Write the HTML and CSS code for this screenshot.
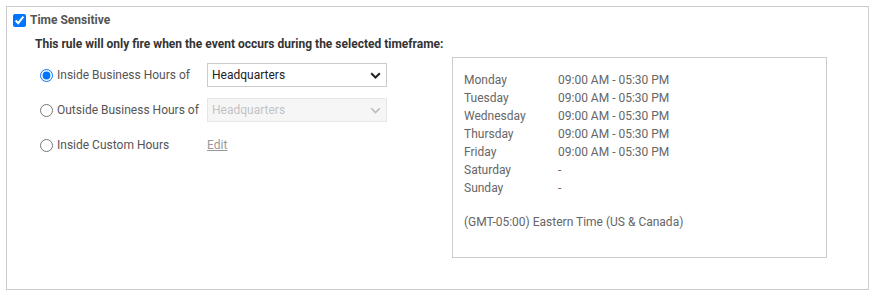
FILE: index.html
```html
<!DOCTYPE html>
<html>
<head>
  <title>Time Sensitive</title>
  <link rel="stylesheet" href="styles.css">
</head>
<body>

  <div class="panel">
    <div class="panel-head">
      <input type="checkbox" id="timeSensitive" checked />
      <label for="timeSensitive">Time Sensitive</label>
    </div>

    <p class="note">This rule will only fire when the event occurs during the selected timeframe:</p>

    <div class="panel-body">
      <div class="options">

        <div class="option-row">
          <input type="radio" name="hours" id="inside" checked />
          <label for="inside">Inside Business Hours of</label>
          <div class="select-wrap">
            <select>
              <option>Headquarters</option>
            </select>
            <svg class="chevron" width="11" height="7" viewBox="0 0 11 7"><path d="M1.2 1.2 L5.5 5.5 L9.8 1.2" fill="none" stroke="#222" stroke-width="2"/></svg>
          </div>
        </div>

        <div class="option-row">
          <input type="radio" name="hours" id="outside" />
          <label for="outside">Outside Business Hours of</label>
          <div class="select-wrap">
            <select disabled>
              <option>Headquarters</option>
            </select>
            <svg class="chevron" width="11" height="7" viewBox="0 0 11 7"><path d="M1.2 1.2 L5.5 5.5 L9.8 1.2" fill="none" stroke="#bbb" stroke-width="1.6"/></svg>
          </div>
        </div>

        <div class="option-row">
          <input type="radio" name="hours" id="custom" />
          <label for="custom">Inside Custom Hours</label>
          <a href="#" class="edit-link">Edit</a>
        </div>

      </div>

      <div class="schedule">
        <div class="day"><span>Monday</span><span>09:00 AM - 05:30 PM</span></div>
        <div class="day"><span>Tuesday</span><span>09:00 AM - 05:30 PM</span></div>
        <div class="day"><span>Wednesday</span><span>09:00 AM - 05:30 PM</span></div>
        <div class="day"><span>Thursday</span><span>09:00 AM - 05:30 PM</span></div>
        <div class="day"><span>Friday</span><span>09:00 AM - 05:30 PM</span></div>
        <div class="day"><span>Saturday</span><span>-</span></div>
        <div class="day"><span>Sunday</span><span>-</span></div>
        <p class="timezone">(GMT-05:00) Eastern Time (US &amp; Canada)</p>
      </div>
    </div>
  </div>

</body>
</html>
```

FILE: styles.css
```css
body {
  font-family: Roboto, "Liberation Sans", Arial, sans-serif;
  font-size: 12px;
  color: #555;
  background: #fff;
  margin: 0;
}

.panel {
  margin: 6px;
  width: 863px;
  height: 284px;
  box-sizing: border-box;
  border: 1px solid #ccc;
  padding: 3px 6px 0 6px;
}

.panel-head {
  display: flex;
  align-items: center;
  height: 20px;
}

.panel-head input[type="checkbox"] {
  width: 13px;
  height: 13px;
  margin: 0 4px 0 0;
  accent-color: #0075ff;
}

.panel-head label {
  font-weight: bold;
  color: #555;
}

.note {
  margin: 6px 0 0 22px;
  line-height: 16px;
  font-weight: bold;
  color: #333;
}

.panel-body {
  display: flex;
  margin-top: 5px;
}

.options {
  width: 412px;
  padding: 6px 0 0 27px;
  display: flex;
  flex-direction: column;
  gap: 11px;
}

.option-row {
  display: flex;
  align-items: center;
  height: 24px;
}

.option-row input[type="radio"] {
  width: 13px;
  height: 13px;
  margin: 0 4px 0 0;
  accent-color: #0075ff;
}

.option-row label {
  width: 150px;
  color: #555;
}

.select-wrap {
  position: relative;
  width: 180px;
  height: 24px;
}

.select-wrap select {
  appearance: none;
  width: 100%;
  height: 24px;
  border: 1px solid #ccc;
  border-radius: 0;
  background: #fff;
  padding: 0 4px;
  font-family: inherit;
  font-size: 12px;
  color: #222;
}

.select-wrap select:disabled {
  background: #f3f3f3;
  border-color: #ddd;
  color: #aaa;
}

.chevron {
  position: absolute;
  right: 6px;
  top: 9px;
}

.edit-link {
  color: #999;
  text-decoration: underline;
}

.schedule {
  width: 375px;
  height: 201px;
  box-sizing: border-box;
  border: 1px solid #ccc;
  padding: 13px 11px 12px;
  color: #666;
}

.day {
  display: flex;
  line-height: 18px;
}

.day span:first-child {
  width: 94px;
}

.timezone {
  margin: 16px 0 0 0;
  line-height: 18px;
}
```
